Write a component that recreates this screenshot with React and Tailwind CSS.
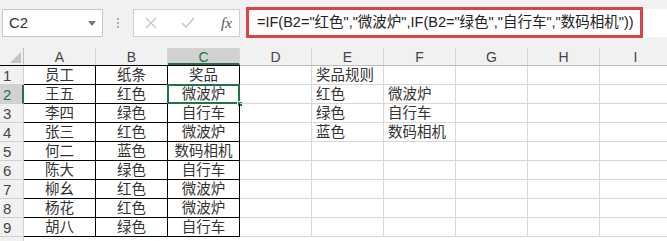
import React from 'react';

const COLS = ['A', 'B', 'C', 'D', 'E', 'F', 'G', 'H', 'I'];

const rows = [
  ['员工', '纸条', '奖品', '', '奖品规则', ''],
  ['王五', '红色', '微波炉', '', '红色', '微波炉'],
  ['李四', '绿色', '自行车', '', '绿色', '自行车'],
  ['张三', '红色', '微波炉', '', '蓝色', '数码相机'],
  ['何二', '蓝色', '数码相机', '', '', ''],
  ['陈大', '绿色', '自行车', '', '', ''],
  ['柳幺', '红色', '微波炉', '', '', ''],
  ['杨花', '红色', '微波炉', '', '', ''],
  ['胡八', '绿色', '自行车', '', '', ''],
];

const font = { fontFamily: '"Liberation Sans", "Noto Sans CJK SC", sans-serif' };

const FormulaBar = () => (
  <div className="h-[48px] bg-[#f1f1f1] flex items-start pt-[9px] pl-[2px]">
    <div className="w-[101px] h-[28px] bg-white border border-[#c8c8c8] flex items-center justify-between pl-[6px] pr-[6px] text-[15px] text-[#333]">
      <span>C2</span>
      <span className="w-0 h-0 border-l-[4px] border-r-[4px] border-t-[5px] border-l-transparent border-r-transparent border-t-[#777]" />
    </div>
    <div className="w-[30px] h-[28px] flex flex-col items-center justify-center gap-[2px]">
      <span className="w-[2px] h-[2px] bg-[#aaa]" />
      <span className="w-[2px] h-[2px] bg-[#aaa]" />
      <span className="w-[2px] h-[2px] bg-[#aaa]" />
    </div>
    <div className="w-[107px] h-[28px] bg-white border border-[#d0d0d0] flex items-center pl-[7px]">
      <svg width="12" height="12" viewBox="0 0 12 12" className="ml-[4px]">
        <path d="M1 1 L11 11 M11 1 L1 11" stroke="#c4c4c4" strokeWidth="1.3" />
      </svg>
      <svg width="14" height="12" viewBox="0 0 14 12" className="ml-[24px]">
        <path d="M1 6 L5 10 L13 1" stroke="#c4c4c4" strokeWidth="1.4" fill="none" />
      </svg>
      <span className="ml-[26px] italic text-[15px] text-[#555]" style={{ fontFamily: '"Liberation Serif", serif' }}>fx</span>
    </div>
    <div className="ml-[6px] mt-[-2px] w-[397px] h-[31px] border-[3px] border-[#d9434b] bg-white flex items-center pl-[8px] text-[14.5px] text-[#222] whitespace-nowrap">
      =IF(B2="红色","微波炉",IF(B2="绿色","自行车","数码相机"))
    </div>
    <div className="flex-1 h-[28px] bg-white" />
  </div>
);

const Header = () => (
  <div className="flex h-[18px] bg-[#f1f1f1] border-b border-[#bdbdbd] text-[14px] leading-[19px] text-[#444]">
    <div className="w-[24px] shrink-0 border-r border-[#bdbdbd] flex items-end justify-end pr-[2px] pb-[2px]">
      <svg width="11" height="11" viewBox="0 0 11 11">
        <path d="M11 0 L11 11 L0 11 Z" fill="#c4c4c4" />
      </svg>
    </div>
    {COLS.map(c => (
      <div
        key={c}
        className={`w-[72px] shrink-0 text-center border-r border-[#d6d6d6] ${c === 'C' ? 'bg-[#d2d2d2] text-[#217346] border-b-2 border-b-[#217346]' : ''}`}
      >
        {c}
      </div>
    ))}
  </div>
);

const Row = ({ n, cells }) => {
  const sel = n === 2;
  return (
    <div className="flex h-[19px] text-[14.5px] leading-[19px] text-[#333]">
      <div className={`w-[24px] shrink-0 border-r border-b border-[#d0d0d0] pl-[3px] text-[15px] ${sel ? 'bg-[#d2d2d2] text-[#217346] border-r-2 border-r-[#217346]' : 'bg-[#f1f1f1] text-[#444]'}`}>
        {n}
      </div>
      {COLS.map((c, i) => {
        const v = cells[i] || '';
        const inTable = i < 3;
        const isSel = sel && c === 'C';
        return (
          <div
            key={c}
            className={`relative w-[72px] shrink-0 border-r border-b ${inTable ? 'border-black text-center' : 'border-[#d8d8d8] pl-[4px]'}`}
          >
            {v}
            {isSel && (
              <>
                <span className="absolute -left-[1px] -top-[1px] -right-[1px] -bottom-[1px] border-2 border-[#217346]" />
                <span className="absolute -right-[4px] -bottom-[4px] w-[6px] h-[6px] bg-[#217346] border border-white" />
              </>
            )}
          </div>
        );
      })}
    </div>
  );
};

export default function App() {
  return (
    <div className="w-[667px] h-[241px] overflow-hidden bg-white" style={font}>
      <FormulaBar />
      <Header />
      <div className="border-t border-black w-[240px] -mt-[1px] relative" />
      {rows.map((r, i) => <Row key={i} n={i + 1} cells={r} />)}
      <div className="flex h-[10px]">
        <div className="w-[24px] shrink-0 bg-[#f1f1f1] border-r border-[#d0d0d0]" />
      </div>
    </div>
  );
}
